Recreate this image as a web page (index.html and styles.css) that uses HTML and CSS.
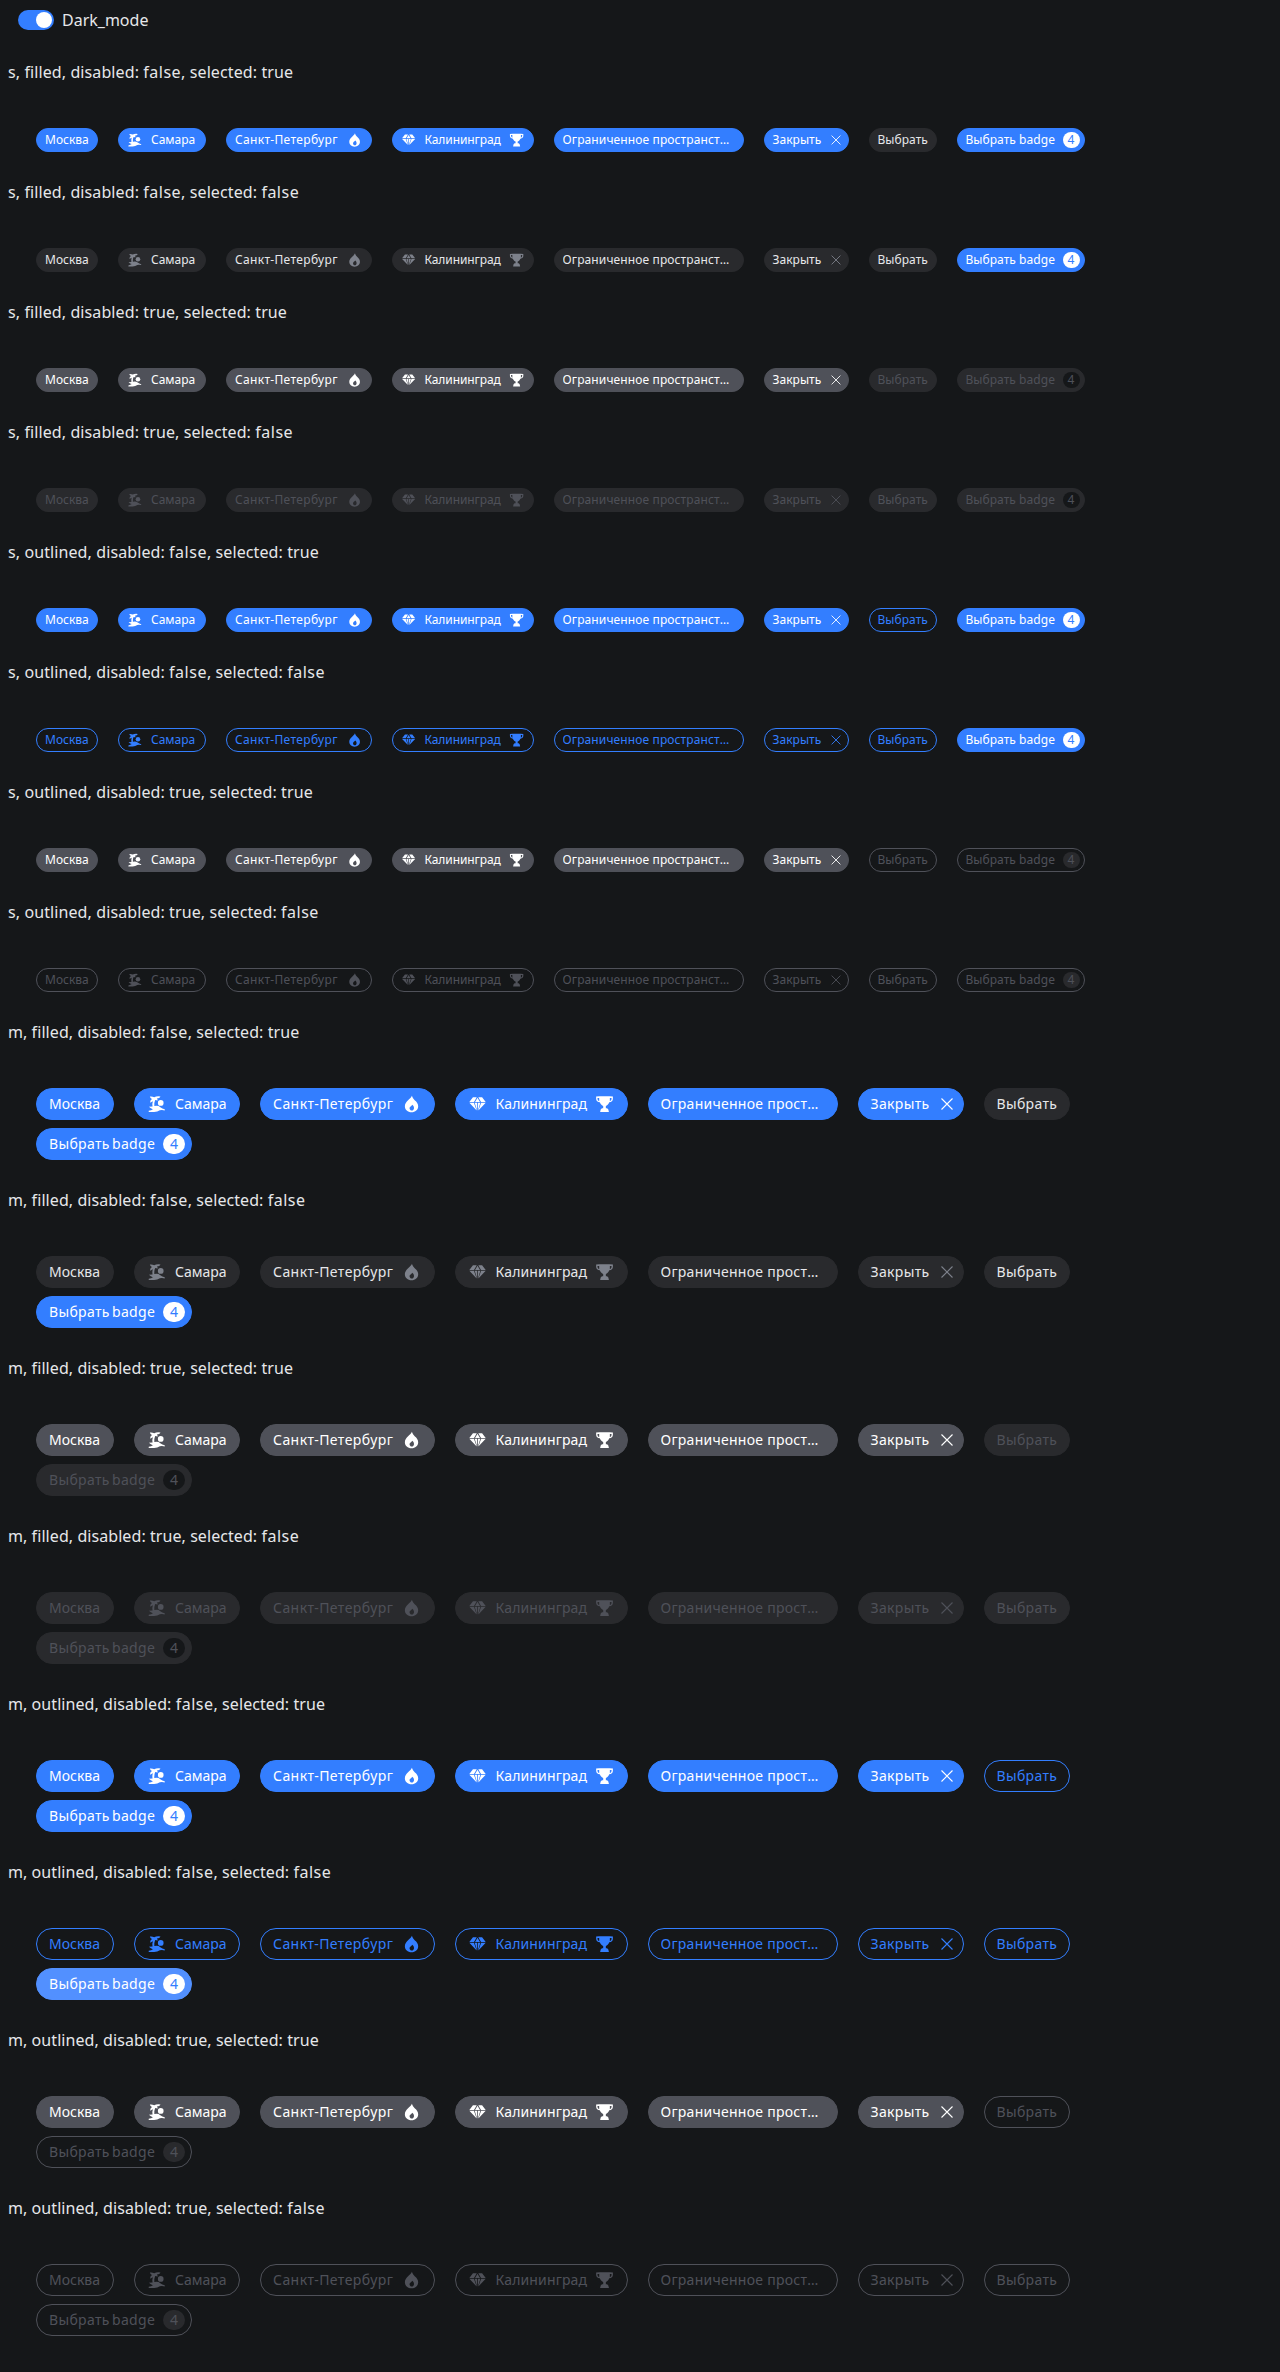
FILE: index.html
```html
<!DOCTYPE html>
<html lang="ru">
<head>
<meta charset="utf-8">
<title>Chips</title>
<link rel="stylesheet" href="styles.css">
</head>
<body>
<svg class="sprite" aria-hidden="true">
  <symbol id="palm" viewBox="-1 -1.5 21 21"><path d="M2 1.200Q4.200.8 6.600 1.900Q9 .4 13.200 1Q12.400 3 9.400 3.300Q10.300 4.200 10.200 5.300Q8.500 5.200 7.600 4.900Q6.400 7.600 6.700 11.200Q10.500 10.200 13 12.300Q15 13.700 17.600 14.600V15.700Q14.800 15 12.500 15.600Q10 17.400 6.500 17.400H.8V16.200Q3.600 15.600 5.200 14.400Q3 13.800 1 11.800Q3 11.500 4.800 11.500Q4.300 8.400 5.200 6Q3.600 6.600 2.400 7.600Q1.800 5.200 4.200 3.700Q2.400 3.200 2 1.200Z"/><circle cx="13.400" cy="7.900" r="3"/></symbol>
  <symbol id="fire" viewBox="-1 -1.5 21 21"><path fill-rule="evenodd" d="M9.400.3C8.600 3.400 2 6.300 2 11.400C2 15.100 5.100 17.700 9 17.700S16 15.100 16 11.400C16 8.600 14.300 6.600 12.600 5.200C11.300 3.900 10.200 2.600 9.400.3ZM9.700 9.700C11.100 10.700 11.600 11.900 11.600 13.200C11.600 14.800 10.600 15.900 9.300 15.900S6.900 14.800 6.900 13.200C6.900 11.700 9 11.100 9.700 9.700Z"/></symbol>
  <symbol id="gem" viewBox="-1 -1.5 21 21"><path d="M4.200 1.800H8.200L5.300 6.800H.4ZM9 2.500L11.600 6.800H6.400ZM9.800 1.800H13.800L17.600 6.800H12.700ZM.4 7.700H5.200L8.100 15.700ZM6 7.700H8.600V15.700ZM9.400 7.700H12L9.400 15.700ZM12.800 7.700H17.600L9.900 15.700Z"/></symbol>
  <symbol id="cup" viewBox="-1 -1.5 21 21"><path fill-rule="evenodd" d="M3.600.8H14.400L17.800 1.200V3.500C17.800 5.800 16.200 7 14 7.200C13 9.400 11.600 10.600 10.400 11V13.400H11.700Q13.400 14.200 13.600 17.400H4.400Q4.600 14.200 6.300 13.400H7.600V11C6.400 10.600 5 9.400 4 7.200C1.800 7 .2 5.800.2 3.500V1.200ZM1.600 2.600C1.600 4.600 2.200 5.600 3.400 5.900V2.600ZM14.600 2.600V5.900C15.800 5.600 16.400 4.600 16.400 2.600Z"/></symbol>
  <symbol id="close" viewBox="-1 -1 20 20"><path d="M3.500 3.500L14.500 14.500M14.500 3.500L3.500 14.500" fill="none" stroke="currentColor" stroke-width="1.100"/></symbol>
</svg>
<main class="page">
  <label class="toggle"><span class="toggle-track"><span class="toggle-thumb"></span></span>Dark_mode</label>
  <div id="sections"></div>
</main>
<script src="chips.js"></script>
</body>
</html>
```
FILE: styles.css
```css
* { box-sizing: border-box; }
body {
  margin: 0;
  background: #151719;
  color: #e6e7ea;
  font-family: "Noto Sans", sans-serif;
  font-size: 16px;
  line-height: 24px;
}
.sprite { display: none; }
.page { padding: 8px 8px 0; }
.toggle { display: flex; align-items: center; gap: 8px; padding-left: 10px; height: 24px; margin-bottom: 28px; }
.toggle-track { display: flex; justify-content: flex-end; align-items: center; width: 36px; height: 20px; padding: 2px; border-radius: 10px; background: #337eff; }
.toggle-thumb { width: 16px; height: 16px; border-radius: 50%; background: #fff; }
.section-title { height: 24px; white-space: nowrap; letter-spacing: 0.1px; }
.m .section-title { letter-spacing: 0.07px; }
.section-title .value-false { letter-spacing: 0.5px; }
.chips { display: flex; flex-wrap: wrap; column-gap: 20px; row-gap: 8px; width: 1084px; padding: 44px 0 28px 28px; }
.chip { display: flex; align-items: center; gap: 8px; flex: none; border-radius: 16px; border: 1px solid transparent; white-space: nowrap; color: #e6e7ea; }
.chip-text { min-width: 0; }
.s .chip { height: 24px; padding: 0 8px; font-size: 12px; line-height: 16px; }
.m .chip { height: 32px; padding: 0 12px; font-size: 14px; line-height: 20px; }
.limited .chip-text { overflow: hidden; text-overflow: ellipsis; }
.s .limited .chip-text { max-width: 168px; letter-spacing: 0.12px; }
.m .limited .chip-text { letter-spacing: 0.27px; }
.icon { flex: none; fill: currentColor; }
.s .icon { width: 16px; height: 16px; }
.m .icon { width: 20px; height: 20px; }
.icon:last-child { margin-left: auto; }
.s .icon-close { margin-right: -4px; }
.m .icon-close { margin-right: -6px; }
.s .hyphenated .chip-text { letter-spacing: 0.36px; }
.m .hyphenated .chip-text { letter-spacing: 0.44px; }
.s .twin-icons .chip-text { letter-spacing: -0.1px; }
.m .twin-icons .chip-text { letter-spacing: 0.14px; }
.s .action .chip-text { letter-spacing: 0.05px; }
.m .action .chip-text { letter-spacing: 0.34px; word-spacing: -1.8px; }
.plain { background: #292a2d; border-color: #292a2d; }
.plain .icon { color: #7d818b; }
.active { background: #337eff; border-color: #337eff; color: #fff; }
.hovered { background: #5290ff; border-color: #5290ff; }
.muted-active { background: #4f5159; border-color: #4f5159; color: #fff; }
.muted-plain { background: #292a2d; border-color: #292a2d; color: #4f5159; }
.muted-plain .icon { color: #4f5159; }
.line { border-color: #337eff; color: #337eff; }
.muted-line { border-color: #4f5159; color: #4f5159; }
.badge { flex: none; margin-left: auto; border-radius: 10px; background: #fff; color: #337eff; text-align: center; }
.s .badge { width: 17px; height: 16px; margin-right: -4px; }
.m .badge { width: 22px; height: 20px; margin-right: -6px; }
.muted-plain .badge { background: #151719; color: #4f5159; }
.muted-line .badge { background: #292a2d; color: #4f5159; }
```
FILE: chips.js
```js
const items = [
  { text: 'Москва', s: 62, m: 78 },
  { text: 'Самара', before: 'palm', s: 88, m: 106 },
  { text: 'Санкт-Петербург', after: 'fire', kind: 'hyphenated', s: 145.5, m: 174.5 },
  { text: 'Калининград', before: 'gem', after: 'cup', kind: 'twin-icons', s: 142, m: 173 },
  { text: 'Ограниченное пространство', kind: 'limited', s: 190, m: 190 },
  { text: 'Закрыть', after: 'close', kind: 'action', s: 85, m: 106 },
  { text: 'Выбрать', choice: true, kind: 'action', s: 68, m: 86 },
  { text: 'Выбрать badge', badge: true, kind: 'action', s: 128, m: 156 },
];
const icon = (name) => (name ? `<svg class="icon icon-${name}"><use href="#${name}"/></svg>` : '');
const value = (flag) => `<span class="value-${flag}">${flag}</span>`;

function tone(item, outlined, disabled, selected) {
  const idle = outlined ? 'line' : 'plain';
  if (item.badge) return disabled ? 'muted-' + idle : 'active';
  if (item.choice) return disabled ? 'muted-' + idle : idle;
  if (selected) return disabled ? 'muted-active' : 'active';
  return disabled ? 'muted-' + idle : idle;
}

let html = '';
for (const size of ['s', 'm'])
  for (const look of ['filled', 'outlined'])
    for (const disabled of [false, true])
      for (const selected of [true, false]) {
        const chips = items.map((item) => {
          let cls = `${item.kind || ''} ${tone(item, look === 'outlined', disabled, selected)}`;
          if (item.badge && size === 'm' && look === 'outlined' && !disabled && !selected) cls += ' hovered';
          return `<div class="chip ${cls}" style="width:${item[size]}px">${icon(item.before)}<span class="chip-text">${item.text}</span>${icon(item.after)}${item.badge ? '<span class="badge">4</span>' : ''}</div>`;
        }).join('');
        html += `<section class="${size} ${look}"><div class="section-title">${size}, ${look}, disabled: ${value(disabled)}, selected: ${value(selected)}</div><div class="chips">${chips}</div></section>`;
      }
document.getElementById('sections').innerHTML = html;
```
